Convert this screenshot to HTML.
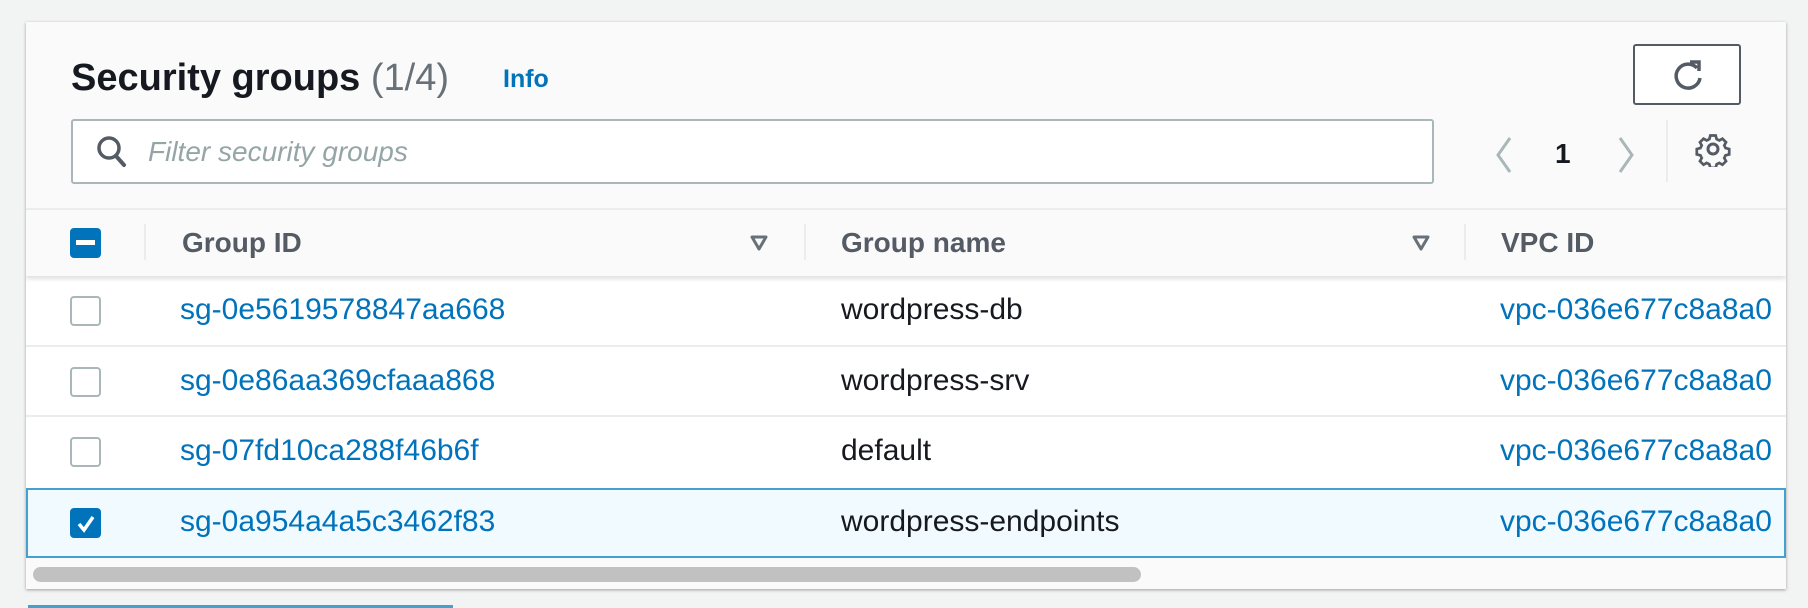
<!DOCTYPE html>
<html><head><meta charset="utf-8"><style>
*{box-sizing:border-box;margin:0;padding:0}
body{width:1808px;height:608px;background:#f2f3f3;font-family:"Liberation Sans",sans-serif;position:relative;overflow:hidden}
.panel{position:absolute;left:26px;top:22px;width:1760px;height:567px;background:#fafafa;box-shadow:0 1px 3px rgba(0,0,0,.35);overflow:hidden}
.abs{position:absolute}
.title{left:45px;top:35px;font-size:38px;font-weight:bold;color:#16191f;white-space:nowrap}
.title span{font-weight:normal;color:#687078}
.info{left:477px;top:43px;font-size:25px;font-weight:bold;color:#0073bb}
.search{left:45px;top:97px;width:1363px;height:65px;background:#fff;border:2px solid #aab7b8;border-radius:3px}
.ph{left:122px;top:114px;font-size:28px;font-style:italic;color:#95a5a6}
.refresh{left:1607px;top:22px;width:108px;height:61px;border:2px solid #545b64;border-radius:3px;background:#fff}
.hdr{left:0;top:186px;width:1760px;height:68px;border-top:2px solid #eaeded;background:#fafafa;box-shadow:0 3px 4px rgba(0,0,0,.12);z-index:2}
.hdr .t{position:absolute;top:17px;font-size:28px;font-weight:bold;color:#545b64}
.div{position:absolute;width:2px;background:#eaeded}
.row{position:absolute;left:0;width:1760px;height:70px;background:#fff;border-bottom:2px solid #eaeded}
.row .c{position:absolute;top:17px;font-size:30px;white-space:nowrap}
.link{color:#0073bb}.tx{color:#16191f}
.cb{position:absolute;left:44px;top:20px;width:31px;height:30px;border:2px solid #aab7b8;border-radius:4px;background:#fff}
.sel{background:#f1faff;border:2px solid #44a0cf}
</style></head><body>
<div class="panel">
<div class="abs title">Security groups <span>(1/4)</span></div>
<div class="abs info">Info</div>
<div class="abs search"></div>
<svg class="abs" style="left:69px;top:112px" width="34" height="36" viewBox="0 0 34 36"><circle cx="14" cy="14" r="10" fill="none" stroke="#545b64" stroke-width="3.5"/><line x1="21" y1="22" x2="29" y2="31" stroke="#545b64" stroke-width="4" stroke-linecap="round"/></svg>
<div class="abs ph">Filter security groups</div>
<div class="abs refresh"><svg style="position:absolute;left:35px;top:12px" width="36" height="36" viewBox="0 0 36 36"><path d="M27 10 A12 12 0 1 0 30 20" fill="none" stroke="#545b64" stroke-width="3.5"/><path d="M20 4 L29 4 L29 13" fill="none" stroke="#545b64" stroke-width="3.5"/></svg></div>
<svg class="abs" style="left:1466px;top:112px" width="24" height="42" viewBox="0 0 24 42"><path d="M18 4 L6 21 L18 38" fill="none" stroke="#aab7b8" stroke-width="3"/></svg>
<div class="abs" style="left:1529px;top:116px;font-size:28px;font-weight:bold;color:#16191f">1</div>
<svg class="abs" style="left:1588px;top:112px" width="24" height="42" viewBox="0 0 24 42"><path d="M6 4 L18 21 L6 38" fill="none" stroke="#aab7b8" stroke-width="3"/></svg>
<div class="div" style="left:1640px;top:98px;height:62px"></div>
<svg class="abs" style="left:1669px;top:109px" width="36" height="36" viewBox="0 0 36 36"><g fill="none" stroke="#545b64" stroke-width="3"><path d="M15 3h6l1 4 3 1.5 3.5-2 4 4-2 3.5 1.5 3 4 1v6l-4 1-1.5 3 2 3.5-4 4-3.5-2-3 1.5-1 4h-6l-1-4-3-1.5-3.5 2-4-4 2-3.5-1.5-3-4-1v-6l4-1 1.5-3-2-3.5 4-4 3.5 2 3-1.5z" transform="scale(.9) translate(2,2)"/><circle cx="18" cy="18" r="5"/></g></svg>
<div class="abs hdr">
<div style="position:absolute;left:44px;top:18px;width:31px;height:30px;background:#0073bb;border-radius:4px"><div style="position:absolute;left:6px;top:12px;width:19px;height:5px;background:#fff"></div></div>
<div class="div" style="left:118px;top:14px;height:36px"></div>
<div class="t" style="left:156px">Group ID</div>
<svg style="position:absolute;left:723px;top:24px" width="20" height="18" viewBox="0 0 20 18"><path d="M3 3 H17 L10 15 Z" fill="none" stroke="#687078" stroke-width="3" stroke-linejoin="round"/></svg>
<div class="div" style="left:778px;top:14px;height:36px"></div>
<div class="t" style="left:815px">Group name</div>
<svg style="position:absolute;left:1385px;top:24px" width="20" height="18" viewBox="0 0 20 18"><path d="M3 3 H17 L10 15 Z" fill="none" stroke="#687078" stroke-width="3" stroke-linejoin="round"/></svg>
<div class="div" style="left:1438px;top:14px;height:36px"></div>
<div class="t" style="left:1475px">VPC ID</div>
</div>
<div class="row" style="top:254px;height:71px"><div class="cb"></div><div class="c link" style="left:154px">sg-0e5619578847aa668</div><div class="c tx" style="left:815px">wordpress-db</div><div class="c link" style="left:1474px">vpc-036e677c8a8a0</div></div>
<div class="row" style="top:325px"><div class="cb"></div><div class="c link" style="left:154px">sg-0e86aa369cfaaa868</div><div class="c tx" style="left:815px">wordpress-srv</div><div class="c link" style="left:1474px">vpc-036e677c8a8a0</div></div>
<div class="row" style="top:395px;height:71px;border-bottom:none"><div class="cb"></div><div class="c tx" style="left:815px">default</div><div class="c link" style="left:154px">sg-07fd10ca288f46b6f</div><div class="c link" style="left:1474px">vpc-036e677c8a8a0</div></div>
<div class="row sel" style="top:466px;height:70px"><div class="cb" style="left:42px;top:18px;background:#0073bb;border-color:#0073bb"><svg style="position:absolute;left:3px;top:3px" width="22" height="22" viewBox="0 0 22 22"><path d="M4 11 L9 17 L18 4" fill="none" stroke="#fff" stroke-width="3.5"/></svg></div><div class="c link" style="left:152px;top:15px">sg-0a954a4a5c3462f83</div><div class="c tx" style="left:813px;top:15px">wordpress-endpoints</div><div class="c link" style="left:1472px;top:15px">vpc-036e677c8a8a0</div></div>
<div class="abs" style="left:7px;top:545px;width:1108px;height:15px;background:#c1c1c1;border-radius:8px"></div>
</div>
<div class="abs" style="left:28px;top:605px;width:425px;height:3px;background:#44a0cf"></div>
</body></html>
